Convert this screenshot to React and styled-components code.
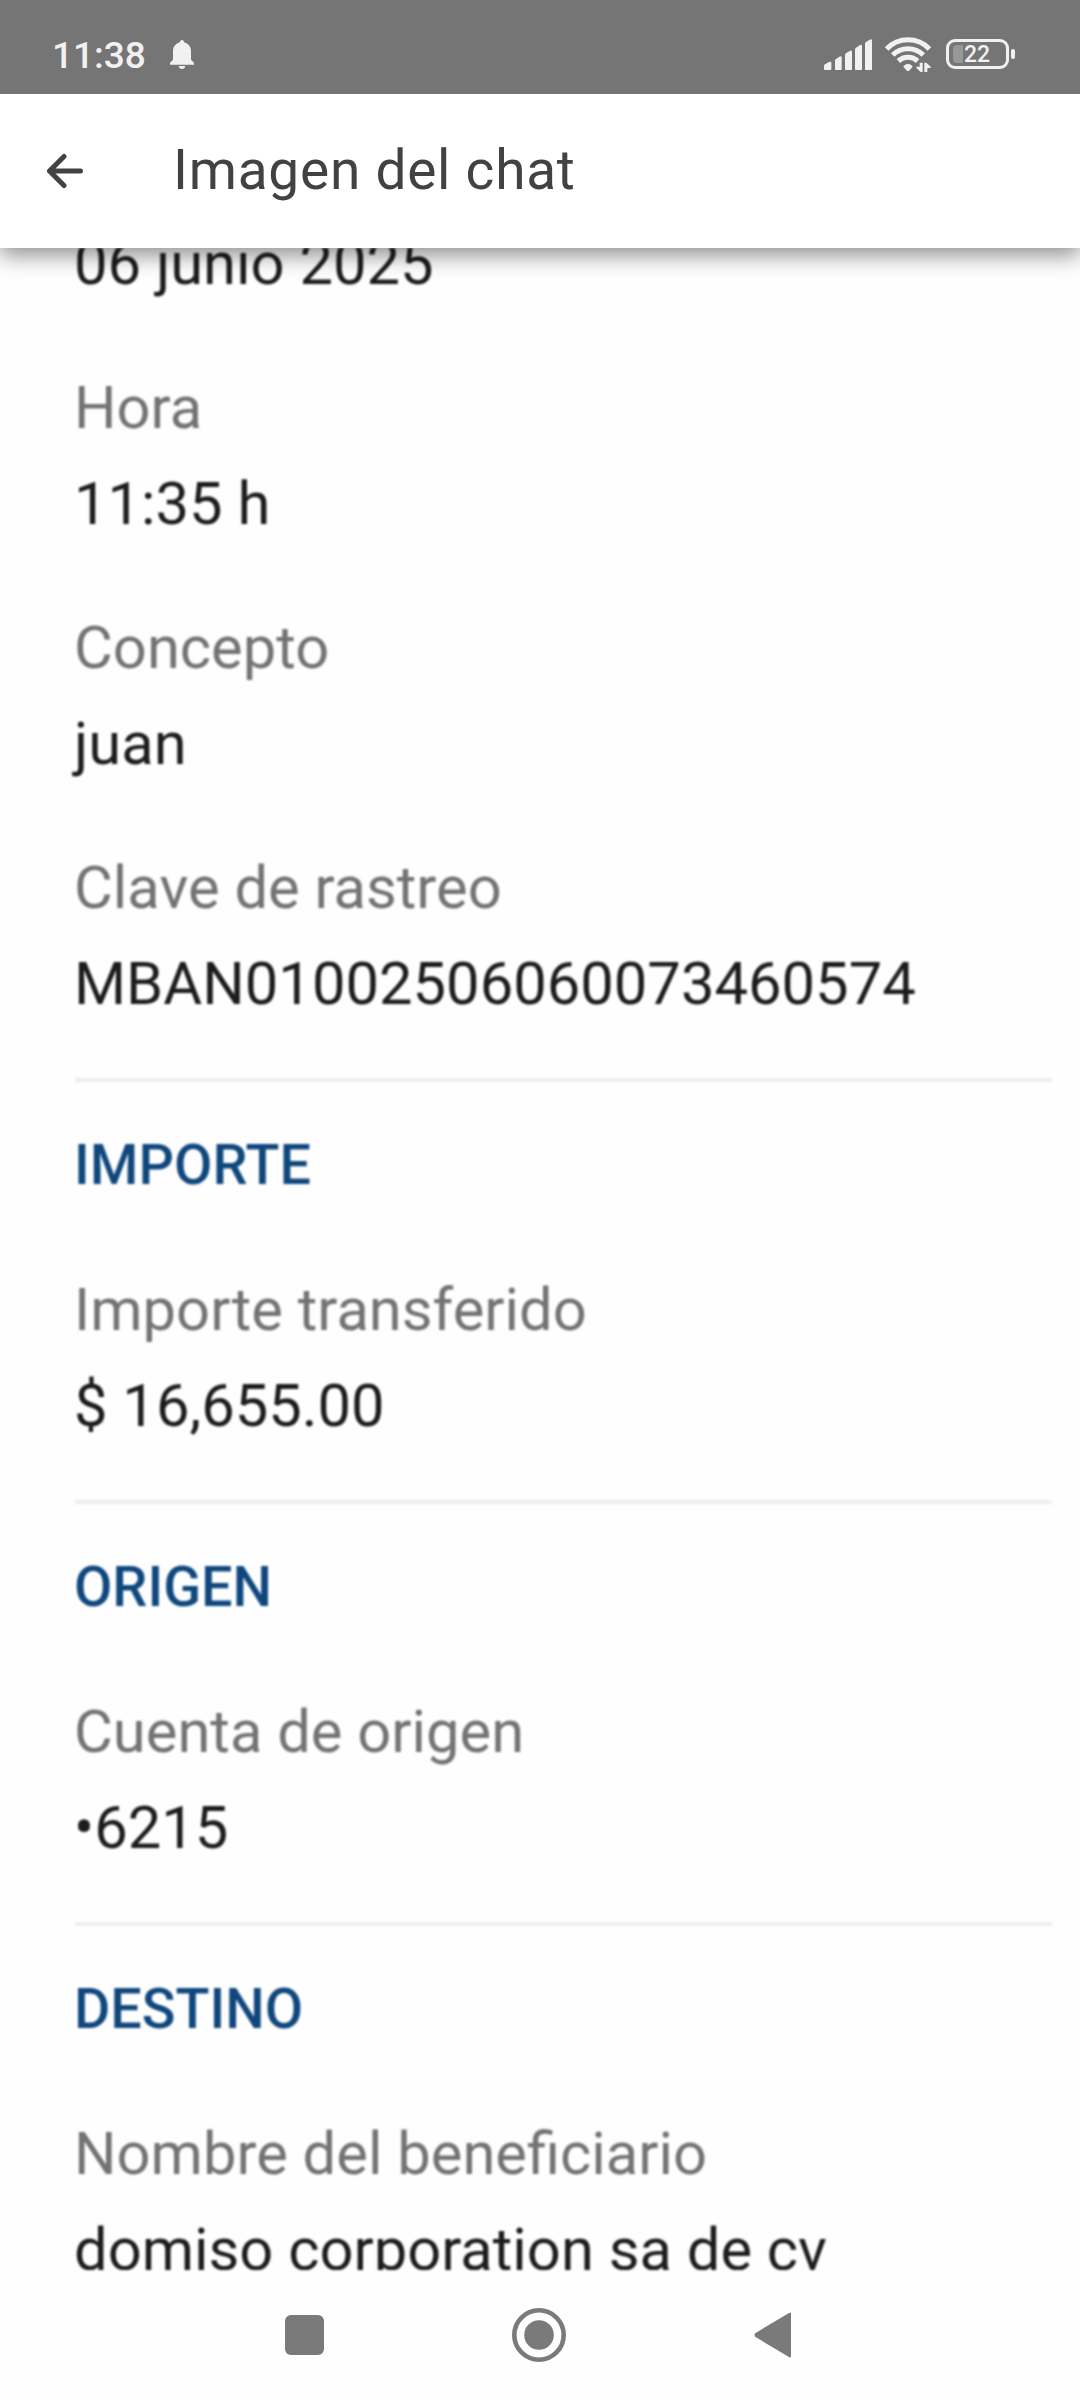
import React, { Fragment } from 'react';
import styled, { createGlobalStyle } from 'styled-components';

const colours = {
    status: '#757575',
    statusIcon: '#f1f1f1',
    title: '#424242',
    label: '#737373',
    value: '#1c1c1c',
    heading: '#0f477d',
    line: '#eeeeee',
    nav: '#7a7a7a',
};

const sections = [
    {
        fields: [
            { value: '06 junio 2025' },
            { label: 'Hora', value: '11:35 h' },
            { label: 'Concepto', value: 'juan' },
            { label: 'Clave de rastreo', value: 'MBAN01002506060073460574' },
        ],
    },
    {
        title: 'IMPORTE',
        fields: [{ label: 'Importe transferido', value: '$ 16,655.00' }],
    },
    {
        title: 'ORIGEN',
        fields: [{ label: 'Cuenta de origen', value: '•6215' }],
    },
    {
        title: 'DESTINO',
        fields: [{ label: 'Nombre del beneficiario', value: 'domiso corporation sa de cv' }],
    },
];

const GlobalStyle = createGlobalStyle`
    body {
        margin: 0;
        background: #fefefe;
        font-family: Roboto, 'Liberation Sans', sans-serif;
    }
`;

const Screen = styled.div`
    display: flex;
    flex-direction: column;
    width: 1080px;
    height: 2400px;
    overflow: hidden;
`;

const StatusBar = styled.div`
    display: flex;
    flex: none;
    align-items: flex-start;
    box-sizing: border-box;
    height: 94px;
    padding: 37px 65px 0 52px;
    background: ${colours.status};
    color: ${colours.statusIcon};
    z-index: 2;
    svg {
        display: block;
        flex: none;
    }
`;

const Clock = styled.span`
    width: 118px;
    margin-top: -4px;
    font-size: 37px;
    font-weight: 500;
    line-height: 45px;
`;

const StatusIcons = styled.div`
    display: flex;
    align-items: flex-start;
    margin-left: auto;
`;

const Battery = styled.div`
    display: flex;
    align-items: center;
    margin: 2px 0 0 15px;
    &:after {
        content: '';
        width: 4px;
        height: 10px;
        margin-left: 2px;
        border-radius: 2px;
        background: ${colours.statusIcon};
    }
`;

const BatteryBody = styled.div`
    display: flex;
    align-items: center;
    box-sizing: border-box;
    width: 63px;
    height: 30px;
    padding-left: 4px;
    border: 3px solid ${colours.statusIcon};
    border-radius: 9px;
    font-size: 23px;
    font-weight: 500;
    line-height: 24px;
`;

const BatteryLevel = styled.div`
    width: 10px;
    height: 18px;
    margin-right: 1px;
    border-radius: 4px 0 0 4px;
    background: #989898;
`;

const BatteryText = styled.span`
    padding-top: 2px;
`;

const AppBar = styled.header`
    display: flex;
    flex: none;
    align-items: center;
    box-sizing: border-box;
    height: 154px;
    padding-left: 46px;
    background: #fff;
    box-shadow: 0 8px 20px rgba(0, 0, 0, 0.42);
    z-index: 1;
`;

const Title = styled.h1`
    margin: -2px 0 0 89px;
    color: ${colours.title};
    font-size: 55px;
    font-weight: 400;
    letter-spacing: 0.75px;
`;

const Receipt = styled.main`
    flex: 1;
    min-height: 0;
    overflow: hidden;
    padding: 0 28px 0 74px;
    filter: blur(0.8px);
`;

const Content = styled.div`
    margin-top: -32px;
`;

const Field = styled.div`
    & + & {
        margin-top: 48px;
    }
`;

const Label = styled.div`
    color: ${colours.label};
    font-size: 59.7px;
    line-height: 96px;
    white-space: nowrap;
`;

const Value = styled(Label)`
    color: ${colours.value};
`;

const Divider = styled.hr`
    height: 4px;
    margin: 46px 0 35px 1px;
    border: 0;
    background: ${colours.line};
`;

const Heading = styled.h2`
    margin: 0 0 49px;
    color: ${colours.heading};
    font-size: 55.7px;
    font-weight: 500;
    line-height: 96px;
`;

const NavBar = styled.nav`
    display: flex;
    flex: none;
    box-sizing: border-box;
    height: 130px;
    padding: 38px 0 0 285px;
    background: #fefefe;
    svg {
        display: block;
    }
`;

const NavButton = styled.div`
    width: ${props => props.$width}px;
`;

const Bell = styled.svg`
    margin-top: 3px;
`;

const Signal = styled.svg`
    margin-top: 2px;
`;

const Wifi = styled.svg`
    margin-left: 13px;
`;

const BellIcon = () => (
    <Bell width="24" height="30" viewBox="0 0 72 90" fill="currentColor">
        <path d="M36 0c4 0 6 3 6 6v1c13 4 21 13 21 27v25l9 9v6H0v-6l9-9V34C9 20 17 11 30 7V6c0-3 2-6 6-6zM26 78h20c-1 6-5 9-10 9s-9-3-10-9z" />
    </Bell>
);

const SignalIcon = () => (
    <Signal width="48" height="32" viewBox="0 0 144 96" fill="currentColor">
        <path d="M0 81q0-3 3-5l12-7q7-3 7 2v20q0 2-2 2H2q-2 0-2-2zM33 66q0-4 3-6l10-7q7-4 7 2v36q0 2-2 2H35q-2 0-2-2zM63 49q0-4 3-6l11-7q7-4 7 2v53q0 2-2 2H65q-2 0-2-2zM93 32q0-4 3-6l11-7q7-4 7 2v70q0 2-2 2H95q-2 0-2-2zM123 15q0-4 3-6l11-7q7-4 7 2v87q0 2-2 2h-17q-2 0-2-2z" />
    </Signal>
);

const WifiIcon = () => (
    <Wifi width="46" height="36" viewBox="0 0 138 108">
        <g fill="none" stroke="currentColor" strokeWidth="15">
            <path d="M5 36A88 88 0 0 1 133 36" />
            <path d="M23 54A66 66 0 0 1 115 54" />
            <path d="M40 72A44 44 0 0 1 98 72" />
        </g>
        <path d="M55 88q14-16 28 0-1 4-11 13-3 2-6 0-10-9-11-13z" fill="currentColor" />
        <path
            d="M104 77h9v28h-6L94 93v-4h10zM118 105V77h6l13 12v4h-10v12z"
            fill="currentColor"
            stroke={colours.status}
            strokeWidth="7"
            paintOrder="stroke"
        />
    </Wifi>
);

const App = () => (
    <Screen>
        <GlobalStyle />
        <StatusBar>
            <Clock>11:38</Clock>
            <BellIcon />
            <StatusIcons>
                <SignalIcon />
                <WifiIcon />
                <Battery>
                    <BatteryBody>
                        <BatteryLevel />
                        <BatteryText>22</BatteryText>
                    </BatteryBody>
                </Battery>
            </StatusIcons>
        </StatusBar>
        <AppBar>
            <svg width="38" height="36" viewBox="0 0 38 36" fill="none" stroke={colours.title} strokeWidth="5" strokeLinecap="round" strokeLinejoin="round">
                <path d="M34.5 18H4M18 3.5L3.5 18 18 32.5" />
            </svg>
            <Title>Imagen del chat</Title>
        </AppBar>
        <Receipt>
            <Content>
                {sections.map(({ title, fields }, i) => (
                    <Fragment key={i}>
                        {title && (
                            <>
                                <Divider />
                                <Heading>{title}</Heading>
                            </>
                        )}
                        {fields.map(({ label, value }) => (
                            <Field key={value}>
                                {label && <Label>{label}</Label>}
                                <Value>{value}</Value>
                            </Field>
                        ))}
                    </Fragment>
                ))}
            </Content>
        </Receipt>
        <NavBar>
            <NavButton $width={227}>
                <svg width="39" height="54" viewBox="0 0 39 54">
                    <rect y="7" width="39" height="40" rx="6" fill={colours.nav} />
                </svg>
            </NavButton>
            <NavButton $width={242}>
                <svg width="54" height="54" viewBox="0 0 54 54">
                    <circle cx="27" cy="27" r="24.7" fill="none" stroke={colours.nav} strokeWidth="4.6" />
                    <circle cx="27" cy="27" r="14.8" fill={colours.nav} />
                </svg>
            </NavButton>
            <NavButton $width={38}>
                <svg width="38" height="54" viewBox="0 0 38 54">
                    <path d="M35 5q2-1.500 2 1v42q0 2.500-2 1L1.500 29q-2-2 0-4z" fill={colours.nav} />
                </svg>
            </NavButton>
        </NavBar>
    </Screen>
);

export default App;
